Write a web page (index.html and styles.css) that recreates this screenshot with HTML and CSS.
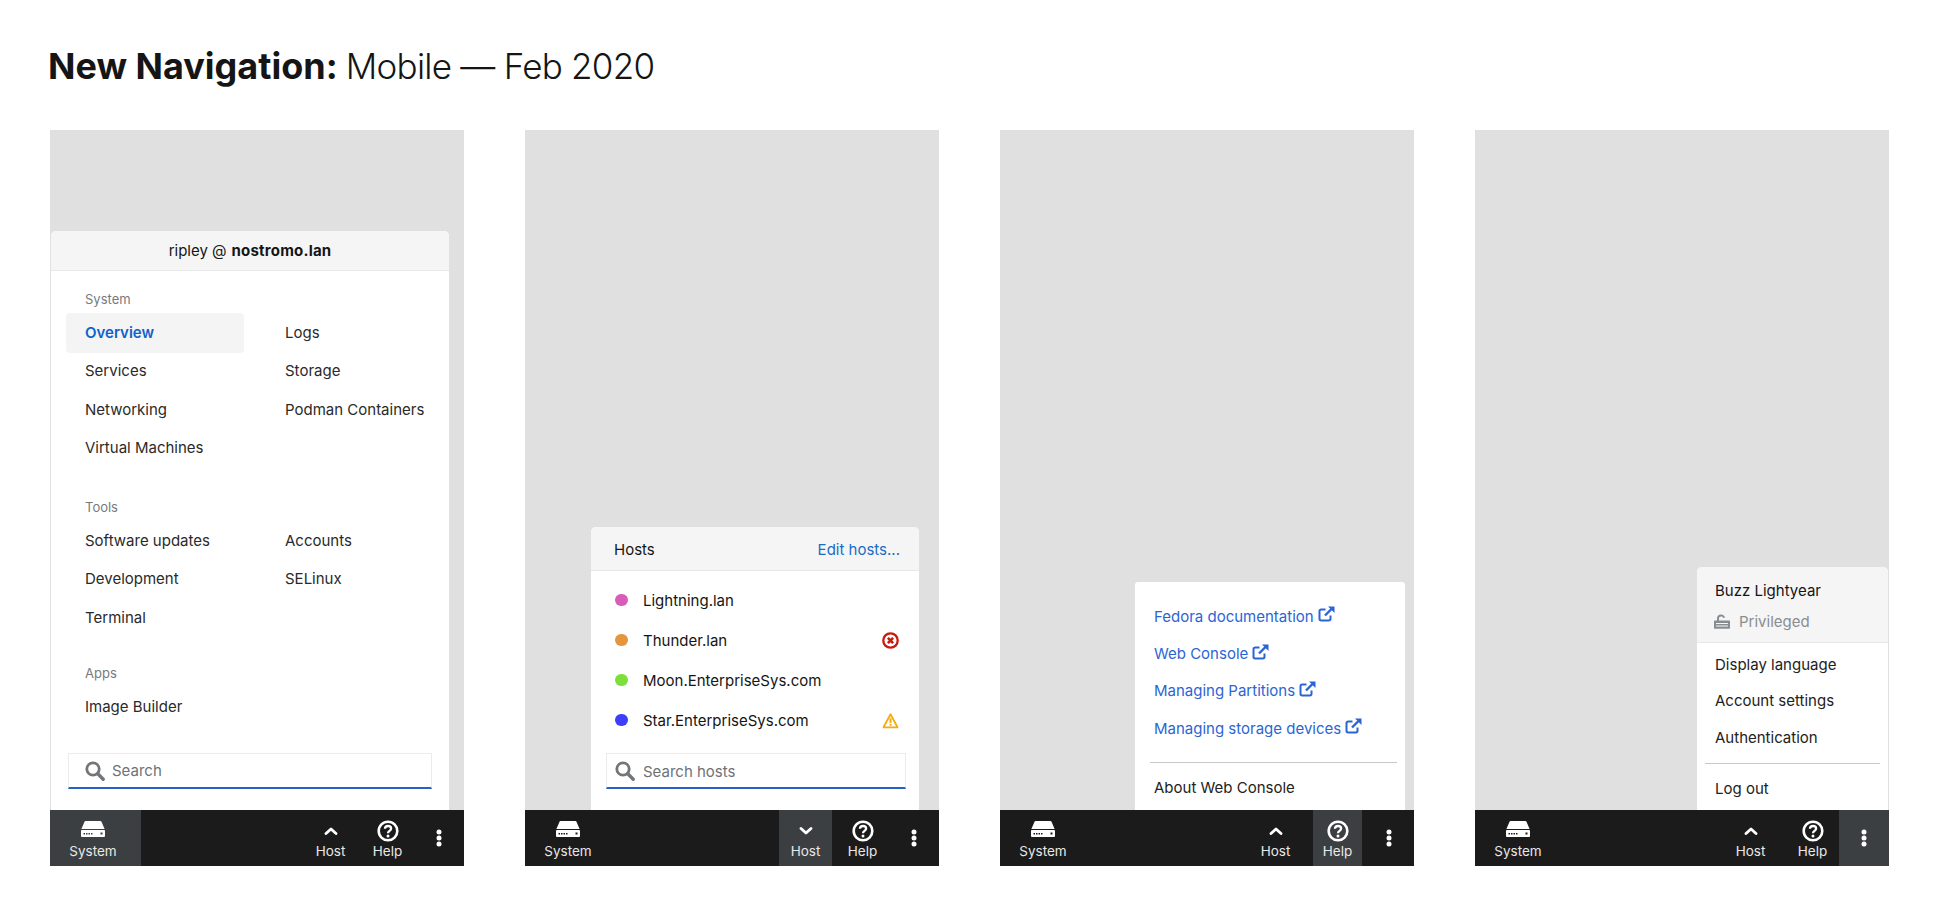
FILE: index.html
```html
<!DOCTYPE html>
<html lang="en">
<head>
<meta charset="utf-8">
<title>New Navigation: Mobile</title>
<link rel="stylesheet" href="styles.css">
</head>
<body>
<svg class="defs" width="0" height="0" aria-hidden="true">
  <symbol id="i-server" viewBox="0 0 24 16"><path fill-rule="evenodd" d="M4.6 0h14.8c.5 0 .9.3 1.1.7L23.6 8H.4L3.5.7C3.700.3 4.100 0 4.600 0zM.8 9h22.400c.4 0 .8.4.8.8v5.400c0 .4-.4.8-.8.8H.8c-.4 0-.8-.4-.8-.8V9.800c0-.4.4-.8.8-.8zM2.500 12v1.500H4V12zM5 12v1.500h1.500V12zM7.500 12v1.500H9V12zM10 12v1.500h1.500V12zM19.500 11.500v2h2v-2z"/></symbol>
  <symbol id="i-up" viewBox="0 0 14 8"><path d="M2 6.500 7 2l5 4.500" fill="none" stroke="currentColor" stroke-width="2.800" stroke-linecap="round" stroke-linejoin="round"/></symbol>
  <symbol id="i-down" viewBox="0 0 14 8"><path d="M2 1.500 7 6l5-4.500" fill="none" stroke="currentColor" stroke-width="2.800" stroke-linecap="round" stroke-linejoin="round"/></symbol>
  <symbol id="i-help" viewBox="0 0 22 22"><circle cx="11" cy="11" r="9.300" fill="none" stroke="currentColor" stroke-width="2.600"/><path d="M7.900 8.700C8 6.900 9.300 6 11 6c1.800 0 3.100 1 3.100 2.600 0 2.400-3.100 2.300-3.100 4.700" fill="none" stroke="currentColor" stroke-width="2.300"/><circle cx="11" cy="16.100" r="1.500" fill="currentColor"/></symbol>
  <symbol id="i-kebab" viewBox="0 0 6 18"><circle cx="3" cy="3" r="2.500"/><circle cx="3" cy="9" r="2.500"/><circle cx="3" cy="15" r="2.500"/></symbol>
  <symbol id="i-search" viewBox="0 0 20 20"><circle cx="8" cy="8" r="6.200" fill="none" stroke="currentColor" stroke-width="2.800"/><path d="m12.800 12.800 5.400 5.400" fill="none" stroke="currentColor" stroke-width="3.400" stroke-linecap="round"/></symbol>
  <symbol id="i-ext" viewBox="0 0 17 16"><path d="M12.500 9.500v3.300c0 1-.7 1.700-1.700 1.700H3.200c-1 0-1.700-.7-1.700-1.700V5.200c0-1 .7-1.700 1.700-1.700h4.300" fill="none" stroke="currentColor" stroke-width="2"/><path d="M7 9.500 13.500 3" fill="none" stroke="currentColor" stroke-width="2.400"/><path d="M10 .5h6.500V7z" fill="currentColor"/></symbol>
  <symbol id="i-error" viewBox="0 0 17 17"><circle cx="8.500" cy="8.500" r="7.200" fill="none" stroke="currentColor" stroke-width="2.300"/><path d="m5.900 5.900 5.200 5.200m0-5.200-5.200 5.200" fill="none" stroke="currentColor" stroke-width="2.700"/></symbol>
  <symbol id="i-warn" viewBox="0 0 17 16"><path d="M8.500 1.800 1.500 14.800h14z" fill="none" stroke="currentColor" stroke-width="1.800" stroke-linejoin="round"/><path d="M8.500 5.800v4.600" fill="none" stroke="currentColor" stroke-width="2"/><circle cx="8.500" cy="12.300" r="1.100" fill="currentColor"/></symbol>
  <symbol id="i-lock" viewBox="0 0 16 15"><path d="M3 7V4.300C3 2 4.700.5 7 .5s3.700 1.300 4 3.200H9C8.800 2.900 8 2.400 7 2.400c-1.200 0-2 .8-2 1.900V7z"/><path fill-rule="evenodd" d="M1 6.500h14c.6 0 1 .4 1 1v6.300c0 .6-.4 1-1 1H1c-.6 0-1-.4-1-1V7.500c0-.6.4-1 1-1zM2 9v1h12V9zM2 11.500v1h12v-1z"/></symbol>
</svg>

<h1 class="title"><strong>New Navigation:</strong> <span class="title-rest">Mobile — Feb 2020</span></h1>

<main class="screens">
  <section class="screen">
    <div class="stage">
      <div class="menu menu-system">
        <header class="menu-head head-center">ripley @ <strong class="host-name">nostromo.lan</strong></header>
        <div class="menu-body">
          <div class="nav-group">
            <div class="nav-label">System</div>
            <ul class="nav-grid">
              <li class="nav-item current">Overview</li><li class="nav-item">Logs</li>
              <li class="nav-item">Services</li><li class="nav-item">Storage</li>
              <li class="nav-item">Networking</li><li class="nav-item">Podman Containers</li>
              <li class="nav-item">Virtual Machines</li>
            </ul>
          </div>
          <div class="nav-group group-tools">
            <div class="nav-label">Tools</div>
            <ul class="nav-grid">
              <li class="nav-item">Software updates</li><li class="nav-item">Accounts</li>
              <li class="nav-item">Development</li><li class="nav-item">SELinux</li>
              <li class="nav-item">Terminal</li>
            </ul>
          </div>
          <div class="nav-group group-apps">
            <div class="nav-label">Apps</div>
            <ul class="nav-grid">
              <li class="nav-item">Image Builder</li>
            </ul>
          </div>
          <div class="search search-system">
            <svg class="search-icon"><use href="#i-search"/></svg>
            <span>Search</span>
          </div>
        </div>
      </div>
    </div>
    <nav class="bar">
      <div class="bar-item item-system active"><svg class="ico-server"><use href="#i-server"/></svg><span>System</span></div>
      <div class="bar-space"></div>
      <div class="bar-item item-host"><svg class="ico-chev"><use href="#i-up"/></svg><span>Host</span></div>
      <div class="bar-item item-help"><svg class="ico-help"><use href="#i-help"/></svg><span>Help</span></div>
      <div class="bar-item item-kebab"><svg class="ico-kebab"><use href="#i-kebab"/></svg></div>
    </nav>
  </section>

  <section class="screen">
    <div class="stage">
      <div class="menu menu-hosts">
        <header class="menu-head head-split"><span>Hosts</span><a class="link">Edit hosts...</a></header>
        <div class="menu-body">
          <ul class="host-list">
            <li class="host"><i class="dot dot-pink"></i><span class="host-text">Lightning.lan</span></li>
            <li class="host"><i class="dot dot-orange"></i><span class="host-text">Thunder.lan</span><svg class="status status-error"><use href="#i-error"/></svg></li>
            <li class="host"><i class="dot dot-green"></i><span class="host-text">Moon.EnterpriseSys.com</span></li>
            <li class="host"><i class="dot dot-blue"></i><span class="host-text">Star.EnterpriseSys.com</span><svg class="status status-warn"><use href="#i-warn"/></svg></li>
          </ul>
          <div class="search search-hosts">
            <svg class="search-icon"><use href="#i-search"/></svg>
            <span>Search hosts</span>
          </div>
        </div>
      </div>
    </div>
    <nav class="bar">
      <div class="bar-item item-system"><svg class="ico-server"><use href="#i-server"/></svg><span>System</span></div>
      <div class="bar-space"></div>
      <div class="bar-item item-host active"><svg class="ico-chev"><use href="#i-down"/></svg><span>Host</span></div>
      <div class="bar-item item-help"><svg class="ico-help"><use href="#i-help"/></svg><span>Help</span></div>
      <div class="bar-item item-kebab"><svg class="ico-kebab"><use href="#i-kebab"/></svg></div>
    </nav>
  </section>

  <section class="screen">
    <div class="stage">
      <div class="menu menu-help">
        <div class="menu-body">
          <ul class="link-list">
            <li class="link-row"><a class="doc-link">Fedora documentation</a><svg class="ico-ext"><use href="#i-ext"/></svg></li>
            <li class="link-row"><a class="doc-link">Web Console</a><svg class="ico-ext"><use href="#i-ext"/></svg></li>
            <li class="link-row"><a class="doc-link">Managing Partitions</a><svg class="ico-ext"><use href="#i-ext"/></svg></li>
            <li class="link-row"><a class="doc-link">Managing storage devices</a><svg class="ico-ext"><use href="#i-ext"/></svg></li>
          </ul>
          <hr class="divider">
          <div class="plain-row">About Web Console</div>
        </div>
      </div>
    </div>
    <nav class="bar">
      <div class="bar-item item-system"><svg class="ico-server"><use href="#i-server"/></svg><span>System</span></div>
      <div class="bar-space"></div>
      <div class="bar-item item-host host-wide"><svg class="ico-chev"><use href="#i-up"/></svg><span>Host</span></div>
      <div class="bar-item item-help active"><svg class="ico-help"><use href="#i-help"/></svg><span>Help</span></div>
      <div class="bar-item item-kebab"><svg class="ico-kebab"><use href="#i-kebab"/></svg></div>
    </nav>
  </section>

  <section class="screen">
    <div class="stage">
      <div class="menu menu-user">
        <header class="menu-head head-user">
          <div class="user-name">Buzz Lightyear</div>
          <div class="user-role"><svg class="ico-lock"><use href="#i-lock"/></svg><span>Privileged</span></div>
        </header>
        <div class="menu-body">
          <ul class="user-list">
            <li class="user-row">Display language</li>
            <li class="user-row">Account settings</li>
            <li class="user-row">Authentication</li>
          </ul>
          <hr class="divider">
          <div class="plain-row">Log out</div>
        </div>
      </div>
    </div>
    <nav class="bar">
      <div class="bar-item item-system"><svg class="ico-server"><use href="#i-server"/></svg><span>System</span></div>
      <div class="bar-space"></div>
      <div class="bar-item item-host host-wide"><svg class="ico-chev"><use href="#i-up"/></svg><span>Host</span></div>
      <div class="bar-item item-help"><svg class="ico-help"><use href="#i-help"/></svg><span>Help</span></div>
      <div class="bar-item item-kebab active"><svg class="ico-kebab"><use href="#i-kebab"/></svg></div>
    </nav>
  </section>
</main>
</body>
</html>
```
FILE: styles.css
```css
* { box-sizing: border-box; }
html, body { margin: 0; padding: 0; }
body {
  background: #fff;
  color: #151515;
  font-family: Inter, "Liberation Sans", sans-serif;
  font-size: 15px;
  height: 916px;
  overflow: hidden;
}
.defs { display: block; height: 0; }
ul { list-style: none; margin: 0; padding: 0; }

.title {
  margin: 0;
  padding: 42px 0 0 48px;
  height: 130px;
  font-size: 36px;
  line-height: 48px;
  font-weight: 300;
  color: #151515;
  white-space: nowrap;
}
.title strong { font-weight: 700; }
.title-rest { font-size: 35px; letter-spacing: -0.75px; margin-left: -2px; }

.screens { display: flex; gap: 61px; padding-left: 50px; }
.screen { width: 414px; height: 736px; display: flex; flex-direction: column; }
.stage {
  flex: 1;
  min-height: 0;
  background: #e0e0e0;
  display: flex;
  flex-direction: column;
  justify-content: flex-end;
}

.bar { height: 56px; background: #1b1b1b; display: flex; color: #e8e8e8; flex: none; }
.bar-space { flex: 1; }
.bar-item { display: flex; flex-direction: column; align-items: center; height: 56px; font-size: 13.500px; line-height: 18px; }
.bar-item.active { background: #3c3f42; }
.bar-item svg { fill: #fff; color: #fff; flex: none; }
.item-system { width: 91px; padding: 11px 5px 0 0; }
.item-host { width: 53px; margin-right: 6px; padding-top: 17px; }
.item-host.host-wide { margin-right: 11px; }
.item-help { width: 49px; margin-right: 2px; padding-top: 10px; }
.item-kebab { width: 50px; justify-content: center; }
.ico-server { width: 24px; height: 16px; margin-bottom: 5px; }
.ico-chev { width: 14px; height: 8px; margin-bottom: 7px; }
.ico-help { width: 22px; height: 22px; }
.ico-kebab { width: 6px; height: 18px; }

.menu { background: #fff; border-radius: 5px 5px 0 0; flex: none; }
.menu-system { width: 398px; margin-left: 1px; }
.menu-hosts { width: 328px; margin-left: 66px; }
.menu-help { width: 270px; margin-left: 135px; }
.menu-user { width: 191px; margin-left: 222px; }

.menu-head { background: #f5f5f5; border-bottom: 1px solid #e8e8e8; border-radius: 5px 5px 0 0; }
.menu-body { background: #fff; border-radius: 3px 3px 0 0; }

.head-center { height: 40px; display: flex; align-items: center; justify-content: center; gap: 5px; font-size: 15px; }
.host-name { font-weight: 700; letter-spacing: 0.2px; }
.head-split { height: 44px; display: flex; align-items: center; justify-content: space-between; padding: 1px 19px 0 23px; }
.link { color: #1a6cc4; }

.menu-system .menu-body { padding-top: 18px; height: 539px; }
.nav-label { height: 20px; line-height: 20px; padding-left: 34px; font-size: 13px; color: #767a7e; margin-bottom: 4.500px; }
.group-tools .nav-label, .group-apps .nav-label { margin-bottom: 5px; }
.nav-grid { display: grid; grid-template-columns: 178px 1fr; column-gap: 22px; padding-left: 15px; }
.nav-item { height: 38.500px; line-height: 38.500px; padding-left: 19px; color: #2a2a2a; }
.nav-item.current { height: 40px; margin: -1px 0 -0.500px; line-height: 40.500px; background: #f4f4f4; color: #0f62c9; font-weight: 600; border-radius: 4px; }
.group-tools { margin-top: 29px; }
.group-apps { margin-top: 26px; }

.search {
  height: 36px;
  border: 1px solid #ececec;
  border-bottom: 2px solid #2562c4;
  display: flex;
  align-items: center;
  color: #6e7276;
  padding-top: 1.500px;
}
.search-icon { width: 20px; height: 20px; color: #737679; flex: none; }
.search-system { width: 364px; margin: 26px 0 0 17px; padding-left: 16px; gap: 7px; }
.search-hosts { width: 300px; margin: 13px 0 0 15px; padding-left: 8px; gap: 8px; }

.host-list { padding-top: 9px; }
.host { height: 40px; display: flex; align-items: center; padding: 0 20px 0 24px; }
.dot { width: 12.500px; height: 12.500px; border-radius: 50%; flex: none; margin-right: 15.500px; }
.dot-pink { background: #d95db8; }
.dot-orange { background: #e4963c; }
.dot-green { background: #7ddf3a; }
.dot-blue { background: #3d3dfa; }
.host-text { flex: 1; }
.status { width: 17px; height: 17px; flex: none; }
.status-error { color: #c9190b; }
.status-warn { color: #f5ac11; }
.menu-hosts .menu-body { height: 239px; }

.menu-help .menu-body { padding-top: 15.500px; height: 228px; }
.link-row { height: 37.400px; display: flex; align-items: center; padding-left: 19px; gap: 4px; color: #2b65d4; }
.doc-link { color: #2b65d4; }
.ico-ext { width: 17px; height: 16px; margin-top: -4px; flex: none; }
.divider { border: 0; border-top: 1px solid #c8c8c8; margin: 15px 8px 0; height: 1px; }
.menu-help .divider { margin: 14.500px 8px 0 15px; }
.plain-row { height: 38px; line-height: 38px; margin-top: 6px; padding-left: 19px; color: #222; }
.menu-user .plain-row { padding-left: 18px; }
.menu-user .menu-body { padding-bottom: 2.500px; }

.head-user { height: 75.700px; padding: 12.700px 0 0 18px; }
.user-name { height: 22px; line-height: 22px; }
.user-role { display: flex; align-items: center; height: 22px; margin-top: 9px; color: #8a8d90; gap: 9px; }
.ico-lock { width: 16px; height: 15px; fill: #8a8d90; margin-left: -1px; }
.user-list { padding-top: 4px; }
.user-row { height: 36.600px; line-height: 36.600px; padding-left: 18px; color: #222; }
.menu-user .divider { margin-top: 6px; }
```
